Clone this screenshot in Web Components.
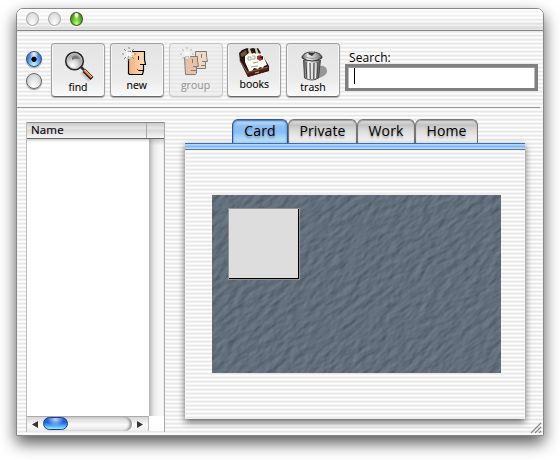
<!DOCTYPE html>
<html lang="en"><head><meta charset="utf-8"><title>Address Book</title>
<style>
html,body{margin:0;width:560px;height:460px;overflow:hidden;background:#fff}
body{font-family:"Open Sans","Noto Sans",sans-serif;color:#000;
--stripes:repeating-linear-gradient(180deg,#fff 0 1px,#f5f5f5 1px 2px,#e8e8e8 2px 3px,#f0f0f0 3px 4px)}
</style></head><body>
<address-window></address-window>
<script>
const define=(name,html,setup)=>customElements.define(name,class extends HTMLElement{
 connectedCallback(){ if(this.shadowRoot)return;
  const t=document.createElement('template');t.innerHTML=html;
  this.attachShadow({mode:'open'}).append(t.content.cloneNode(true)); if(setup)setup(this,this.shadowRoot);}
});

define('title-bar',`<style>
:host{display:flex;height:22px;box-sizing:border-box;padding:3px 0 0 9px;gap:7px;border-bottom:1px solid #858585;border-radius:6px 6px 0 0;background:linear-gradient(rgba(255,255,255,.75),rgba(255,255,255,.15) 50%,rgba(190,190,190,.42)),var(--stripes)}
i{width:13px;height:14px;box-sizing:border-box;border:1px solid #aaa;border-radius:50%;margin-right:2px;background:radial-gradient(ellipse at 50% 100%,#fff 5%,#e5e5e5 55%,#d0d0d0);box-shadow:0 1px 0 #fff}
i.on{border-color:#3b5425;background:radial-gradient(ellipse at 50% 15%,#efffdc 0 13%,transparent 34%),radial-gradient(ellipse at 50% 95%,#bdfb72 5%,#66bd2e 50%,#2c7412)}
</style><i></i><i></i><i class="on"></i>`);

define('aqua-radio',`<style>
:host{display:block;width:16px;height:16px;box-sizing:border-box;border:1px solid #666;border-radius:50%;background:radial-gradient(ellipse at 50% 100%,#fff 10%,#e4e4e4 50%,#bbb);box-shadow:0 1px 1px #999}
:host([checked]){border-color:#374b83;background:radial-gradient(circle at 50% 52%,#000 0 2.2px,transparent 3px),radial-gradient(ellipse at 50% 0,#e9f3ff 10%,transparent 45%),radial-gradient(ellipse at 50% 100%,#c4f4ff 5%,#69a9ed 50%,#2b4fab)}
</style>`);

define('tool-button',`<style>
:host{display:flex;flex-direction:column;align-items:center;position:relative;width:54px;height:54px;box-sizing:border-box;border:1px solid #a0a0a0;border-bottom-color:#6a6a6a;border-radius:4px;background:linear-gradient(#e4e4e4,#ebebeb 70%,#fbfbfb);box-shadow:0 1px 1px #aaa,inset 1px 0 #f6f6f6,inset -1px 0 #f6f6f6,inset 0 -1px #fff}
:host([disabled]){border-color:#c8c8c8;background:rgba(232,232,232,.6);box-shadow:0 1px 1px #ddd;color:#999}
:host([disabled]) .icon{opacity:.55}
.icon{height:36px;width:52px;flex:none}
.label{font-size:10.5px;line-height:13px;margin-top:var(--drop,0px);-webkit-text-stroke:.1px currentColor}
</style><div class="icon"><slot name="icon"></slot></div><div class="label"><slot></slot></div>`);

const star='<path stroke="#888" d="M1 7H5M11 7H15M8 0V4M8 10V14M3 2L5 4M11 10L13 12M13 2L11 4M5 10L3 12"/><path stroke="#fff" stroke-width="1.300" d="M3 7H13M8 2V12M5 4L11 10M11 4L5 10"/>';
define('tool-icon',`<style>:host{display:block}svg{display:block}</style><div></div>`,(h,r)=>{
 const a={
 find:`<defs><radialGradient id="g" cx=".4" cy=".75"><stop stop-color="#fff"/><stop offset=".5" stop-color="#ddd"/><stop offset="1" stop-color="#aaa"/></radialGradient></defs><path d="M30 28l8 8" stroke="#ccc" stroke-width="5"/><circle cx="22.500" cy="17" r="8.700" fill="url(#g)" stroke="#28282d" stroke-width="1.800"/><circle cx="22.500" cy="17" r="7.500" fill="none" stroke="#c4c6ca" stroke-width="1"/><path d="M20 13q5-4 8 2-4-1-8 1z" fill="#777"/><path d="M29 23l3.500 3.500" stroke="#333" stroke-width="2.600"/><path d="M32 26.500l8 8" stroke="#30100c" stroke-width="4"/><path d="M32 26l7.500 7.500" stroke="#d78761" stroke-width="2"/><path d="M33 26l7 7" stroke="#ffd1aa" stroke-width=".7"/>`,
 new:`<defs><linearGradient id="g"><stop stop-color="#f4b080"/><stop offset="1" stop-color="#ffdfba"/></linearGradient></defs><path d="M17.500 7.500H33.500V15.500L34.500 20.500H32.500V26.500L31.500 30.500H18.500L17.500 29.500Z" fill="url(#g)" stroke="#000" stroke-width="1.200"/><path d="M27.500 12v4M29 20.500h5M26.500 25.500l1 1H32" stroke="#000"/><g transform="translate(10 3)">${star}</g>`,
 group:`<path d="M25.500 7.500H36.500V12L37.500 17.500H35.500V24.500H25.500Z" fill="#f6ca9e" stroke="#222"/><path d="M31.500 10v4M32 17.500h5M31 21.500h4" stroke="#222"/><path d="M14.500 12.500H27.500V17L28.500 22.500H26.500V29.500L25.500 30.500H15.500Z" fill="#e2a170" stroke="#222"/><path d="M22.500 15v4M23 22.500h5M21 26.500h5" stroke="#222"/><g transform="translate(9 3)">${star}</g>`,
 books:`<path d="M11 9l3-3 5-2 2 1 4-1 3 1 2-1 3 5 8 13v5l-21 6-8-16z" fill="#241614"/><path d="M12 10l6-4 1 4-5 3z" fill="#735241"/><path d="M20 5l2 0 2 5h-3zM27 5l2 0 2 5h-3z" fill="#d8cfb2"/><path d="M17 12l4-3 2 1 3-1 3 1 5-1 5 12-3 1-1 2-3-1-2 2-4-1-2 3-3 0-4-9z" fill="#fffdf4"/><path d="M20 13h3v3h-3zM24 12h3v3h-3M25 19l5-1M23 23l7-1" stroke="#a7a59a"/><path d="M29 12l4-1 2 4-3 2-3-2z" fill="#b52830"/><path d="M32 13l3-1v4z" fill="#241015"/><path d="M11 15l9 13 20-5v4l-20 6z" fill="#52241c"/><path d="M20 28l20-5M12 17l8 12" stroke="#9a6651"/><path d="M20 31l20-5v1l-20 5z" fill="#351510"/><path d="M27 29l4-1" stroke="#d1aa7c"/>`,
 trash:`<defs><linearGradient id="g"><stop stop-color="#555"/><stop offset=".3" stop-color="#eee"/><stop offset=".65" stop-color="#bbb"/><stop offset="1" stop-color="#555"/></linearGradient></defs><path d="M31 22q9-1 9 5c0 5-6 6-13 9z" fill="#969696"/><path d="M16.500 16l1 18q8 4 14 0l2-18z" fill="url(#g)" stroke="#333" stroke-width=".8"/><path d="M19 18l.8 16M23 19l.3 16M27 19l-.3 16M31 18l-1 16" stroke="#444"/><path d="M21.200 19v15M25 19v16M29 19l-.5 15" stroke="#f4f4f4"/><path d="M15 14c0-4 5-6 10-6s10 2 10 6q-10 6-20 0" fill="url(#g)" stroke="#222" stroke-width=".9"/><path d="M17 12q8 5 16 0" stroke="#999"/><path d="M21 10q3-4 7-1l-3 3z" fill="#333"/><path d="M23 8h4" stroke="#ddd"/>`};
 r.querySelector('div').innerHTML='<svg width="52" height="38" viewBox="0 0 52 38" fill="none">'+a[h.getAttribute('kind')]+'</svg>';
});

define('search-field',`<style>
:host{display:block;width:193px;padding-top:8px}
label{display:block;font-size:12px;line-height:14px;height:13px;padding-left:4px;letter-spacing:.1px}
.box{width:193px;height:27px;box-sizing:border-box;border:3px solid #808080;background:#fff;box-shadow:inset 0 1px #999,inset 1px 0 #bbb,inset -1px 0 #bbb;padding:1px 0 0 6px}
.caret{width:1px;height:16px;background:#000}
</style><label><slot></slot></label><div class="box"><div class="caret"></div></div>`);

define('name-list',`<style>
:host{display:grid;grid-template:17px 277px 15px/122px 15px;width:139px;height:310px;box-sizing:border-box;border-left:1px solid #bbb;border-right:1px solid #aaa}
.head{grid-column:1/3;display:flex;box-sizing:border-box;border-top:1px solid #888;border-bottom:1px solid #666;background:linear-gradient(#cacaca,#e6e6e6 35%,#d9d9d9 50%,#f7f7f7);font-size:11.5px;line-height:14px;letter-spacing:.15px;-webkit-text-stroke:.15px #000}
.name{width:115px;padding-left:4px;border-right:1px solid #aaa}
.list{background:linear-gradient(#ccc,#fff 3px)}
.groove{background:linear-gradient(#8886,transparent 6px),linear-gradient(90deg,#b2b2b2,#e9e9e9 5px,#fafafa 12px,#eee)}
.scroll{display:flex;align-items:center;box-sizing:border-box;border-top:1px solid #aaa;border-right:1px solid #bbb;background:linear-gradient(#d7d7d7,#fafafa 55%,#eee)}
.arrow{width:16px;display:flex;justify-content:center}
.track{width:90px;height:14px;border-radius:7px;background:linear-gradient(#d2d2d2,#fafafa 55%,#e6e6e6);box-shadow:inset -3px 0 3px -1px #888}
.thumb{width:25px;height:13px;box-sizing:border-box;border:1px solid #193b91;border-radius:7px;background:radial-gradient(ellipse at 50% 12%,#bad9ff,transparent 50%),linear-gradient(#315fda,#2364ce 40%,#56b3ff 75%,#a3efff)}
.corner{background:#fff}
</style><div class="head"><div class="name">Name</div></div><div class="list"></div><div class="groove"></div>
<div class="scroll"><div class="arrow"><svg width="6" height="7"><path d="M6 0v7L0 3.500z" fill="#333"/></svg></div><div class="track"><div class="thumb"></div></div><div class="arrow"><svg width="6" height="7"><path d="M0 0v7l6-3.500z" fill="#333"/></svg></div></div><div class="corner"></div>`);

define('aqua-tab',`<style>
:host{display:block;box-sizing:border-box;height:24px;border:1px solid #777;border-bottom:0;border-radius:6px 6px 0 0;background:linear-gradient(#e4e4e4,#c2c2c2 5px,#d9d9d9 10px,#fafafa);font-size:14px;line-height:22px;text-align:center;text-shadow:0 2px 2px #0005;letter-spacing:.1px;box-shadow:inset 0 1px 1px #999}
:host([active]){border-color:#315991;background:linear-gradient(#d1e7ff,#8fbff0 6px,#8bbef5 12px,#c7ecff);box-shadow:inset 0 1px 2px #2863b7}
</style><slot></slot>`);

define('rock-card',`<style>
:host{display:block;width:289px;height:178px;position:relative;background:#616e7d;overflow:hidden}
svg{display:block}
.photo{position:absolute;left:16px;top:13px;width:72px;height:72px;box-sizing:border-box;background:#ddd;border:1px solid #929292;box-shadow:inset -1px -1px #000}
</style><svg width="289" height="178"><defs><filter id="rock" x="0" y="0" width="1" height="1" color-interpolation-filters="sRGB"><feTurbulence type="fractalNoise" baseFrequency=".08 .17" numOctaves="3" seed="8"/><feDiffuseLighting surfaceScale=".75" diffuseConstant="1.220" lighting-color="#626e7b"><feDistantLight azimuth="245" elevation="55"/></feDiffuseLighting></filter></defs><g transform="rotate(-38 144 89)"><rect x="-60" y="-100" width="410" height="390" filter="url(#rock)"/></g></svg><div class="photo"></div>`);

define('card-tabs',`<style>
:host{display:block;width:340px}
.tabs{display:flex;padding-left:47px;height:24px}
.panel{height:276px;box-sizing:border-box;background:var(--stripes);box-shadow:0 3px 7px #0009;position:relative}
.band{height:7px;box-sizing:border-box;border-top:1px solid #3970b6;border-bottom:1px solid #667889;background:linear-gradient(#bedcff,#83baf5 50%,#bde5ff)}
rock-card{margin:45px 0 0 27px}
</style><div class="tabs"><aqua-tab active style="width:56px">Card</aqua-tab><aqua-tab style="width:69px">Private</aqua-tab><aqua-tab style="width:58px">Work</aqua-tab><aqua-tab style="width:63px">Home</aqua-tab></div>
<div class="panel"><div class="band"></div><rock-card></rock-card></div>`);

define('address-window',`<style>
:host{display:block;position:relative;box-sizing:border-box;width:528px;height:428px;margin:8px 16px 0;border:1px solid #888;border-radius:7px 7px 0 0;background:var(--stripes);box-shadow:0 7px 16px #000a}
.tools{display:flex;height:76px;box-sizing:border-box;padding:12px 0 0 9px}
.radios{display:flex;flex-direction:column;gap:6px;width:25px;padding-top:8px}
.buttons{display:flex;gap:4.750px}
search-field{margin-left:5px}
.rule{height:1px;background:#999;margin-right:3px}
.main{display:flex;padding:14px 0 0 9px}
card-tabs{margin:-3px 0 0 20px}
.grip{position:absolute;right:1px;bottom:1px}
</style><title-bar></title-bar>
<div class="tools"><div class="radios"><aqua-radio checked></aqua-radio><aqua-radio></aqua-radio></div>
<div class="buttons"><tool-button style="--drop:1px"><tool-icon slot="icon" kind="find"></tool-icon>find</tool-button><tool-button style="--drop:-1px"><tool-icon slot="icon" kind="new"></tool-icon>new</tool-button><tool-button disabled style="--drop:-1px"><tool-icon slot="icon" kind="group"></tool-icon>group</tool-button><tool-button style="--drop:-2px"><tool-icon slot="icon" kind="books"></tool-icon>books</tool-button><tool-button style="--drop:1px"><tool-icon slot="icon" kind="trash"></tool-icon>trash</tool-button></div>
<search-field>Search:</search-field></div><div class="rule"></div>
<div class="main"><name-list></name-list><card-tabs></card-tabs></div>
<svg class="grip" width="12" height="12"><path d="M1 11L11 1M5 11L11 5M9 11l2-2" stroke="#888" stroke-width="1.200"/></svg>`);
</script></body></html>
